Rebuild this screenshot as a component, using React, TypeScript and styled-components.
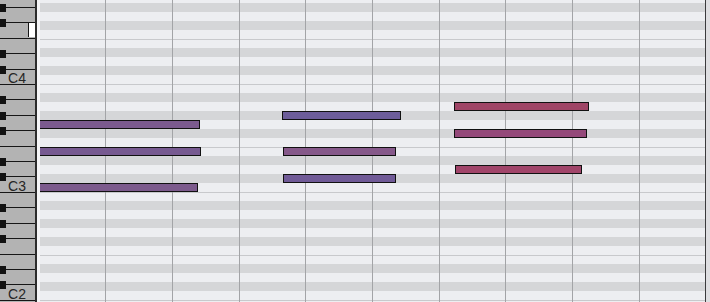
import styled, { createGlobalStyle, css } from "styled-components";

const GlobalStyle = createGlobalStyle`
  html, body {
    margin: 0;
    padding: 0;
    background: #dfdfe2;
  }
  body {
    font-family: "Liberation Sans", Arial, sans-serif;
  }
`;

const ROW = 9;
const KEY = 108 / 7;

const Wrap = styled.div`
  display: flex;
  width: 710px;
  height: 302px;
  overflow: hidden;
  background: #dfdfe2;
`;

const Keyboard = styled.div`
  flex: 0 0 35px;
  overflow: hidden;
  background: #b3b3b3;
`;

const Keys = styled.div`
  display: flex;
  flex-direction: column;
  margin-top: -24px;
`;

const Key = styled.div<{ $sharp: boolean }>`
  position: relative;
  flex: 0 0 ${KEY}px;
  box-sizing: border-box;
  border-top: 1px solid #161616;
  display: flex;
  align-items: flex-end;
  ${(p) =>
    p.$sharp &&
    css`
      &::before {
        content: "";
        position: absolute;
        left: 0;
        top: -4px;
        width: 6px;
        height: 8px;
        background: #121212;
      }
    `}
`;

const Label = styled.span`
  padding-left: 8px;
  margin-bottom: -1px;
  font-size: 14px;
  line-height: 14px;
  color: #262626;
`;

const Marker = styled.div`
  align-self: stretch;
  margin-left: auto;
  margin-bottom: 1px;
  width: 6px;
  background: #ffffff;
  border-left: 1px solid #161616;
`;

const Divider = styled.div`
  flex: 0 0 3px;
  border-left: 2px solid #2c2c2c;
  background: #f4f4f6;
`;

const Roll = styled.div`
  position: relative;
  flex: 0 0 665px;
  overflow: hidden;
`;

const Rows = styled.div`
  display: flex;
  flex-direction: column;
  margin-top: -6px;
`;

const Row = styled.div<{ $black: boolean; $edge: boolean }>`
  flex: 0 0 ${ROW}px;
  box-sizing: border-box;
  background: ${(p) => (p.$black ? "#d5d6d8" : "#edeef1")};
  ${(p) => p.$edge && "border-top: 1px solid #c8c9cc;"}
`;

const Beats = styled.div`
  position: absolute;
  top: 0;
  bottom: 0;
  left: -1.33px;
  display: flex;
  pointer-events: none;
`;

const Beat = styled.div`
  flex: 0 0 66.667px;
  box-sizing: border-box;
  border-left: 1px solid #a3a4a7;
`;

const Note = styled.div`
  position: absolute;
  height: ${ROW}px;
  box-sizing: border-box;
  border: 1px solid #111111;
`;

const EndLine = styled.div`
  flex: 0 0 1px;
  background: #3b3b3d;
`;

const Gutter = styled.div`
  flex: 1;
  background: #dedee1;
`;

// top to bottom, B4 down to B1
const whiteKeys = ["B", "A", "G", "F", "E", "D", "C"];
const keyList: { name: string; octave: number }[] = [];
for (const oct of [4, 3, 2]) {
  for (const n of whiteKeys) keyList.push({ name: n, octave: oct });
}
keyList.push({ name: "B", octave: 1 });

const semis = ["B", "A#", "A", "G#", "G", "F#", "F", "E", "D#", "D", "C#", "C"];
// rows start at A4
const rows: string[] = [];
for (let i = 2; i < 2 + 35; i++) rows.push(semis[i % 12]);

const notes = [
  { row: 14, x: -2, w: 162, color: "#7b5a8e" },
  { row: 17, x: -2, w: 163, color: "#775a91" },
  { row: 21, x: -2, w: 160, color: "#7c5a8c" },
  { row: 13, x: 242, w: 119, color: "#6d5d9a" },
  { row: 17, x: 243, w: 113, color: "#86598a" },
  { row: 20, x: 243, w: 113, color: "#705a97" },
  { row: 12, x: 414, w: 135, color: "#9f4566" },
  { row: 15, x: 414, w: 133, color: "#94497a" },
  { row: 19, x: 415, w: 127, color: "#a1456a" },
];

export default function App() {
  return (
    <>
      <GlobalStyle />
      <Wrap>
        <Keyboard>
          <Keys>
            {keyList.map((k, i) => (
              <Key key={i} $sharp={"CDFGA".includes(k.name)}>
                {k.name === "C" && <Label>C{k.octave}</Label>}
                {k.name === "F" && k.octave === 4 && <Marker />}
              </Key>
            ))}
          </Keys>
        </Keyboard>
        <Divider />
        <Roll>
          <Rows>
            {rows.map((r, i) => (
              <Row key={i} $black={r.includes("#")} $edge={r === "E" || r === "B"} />
            ))}
          </Rows>
          <Beats>
            {Array.from({ length: 11 }).map((_, i) => (
              <Beat key={i} />
            ))}
          </Beats>
          {notes.map((n, i) => (
            <Note
              key={i}
              style={{ left: n.x, top: n.row * ROW - 6, width: n.w, background: n.color }}
            />
          ))}
        </Roll>
        <EndLine />
        <Gutter />
      </Wrap>
    </>
  );
}
